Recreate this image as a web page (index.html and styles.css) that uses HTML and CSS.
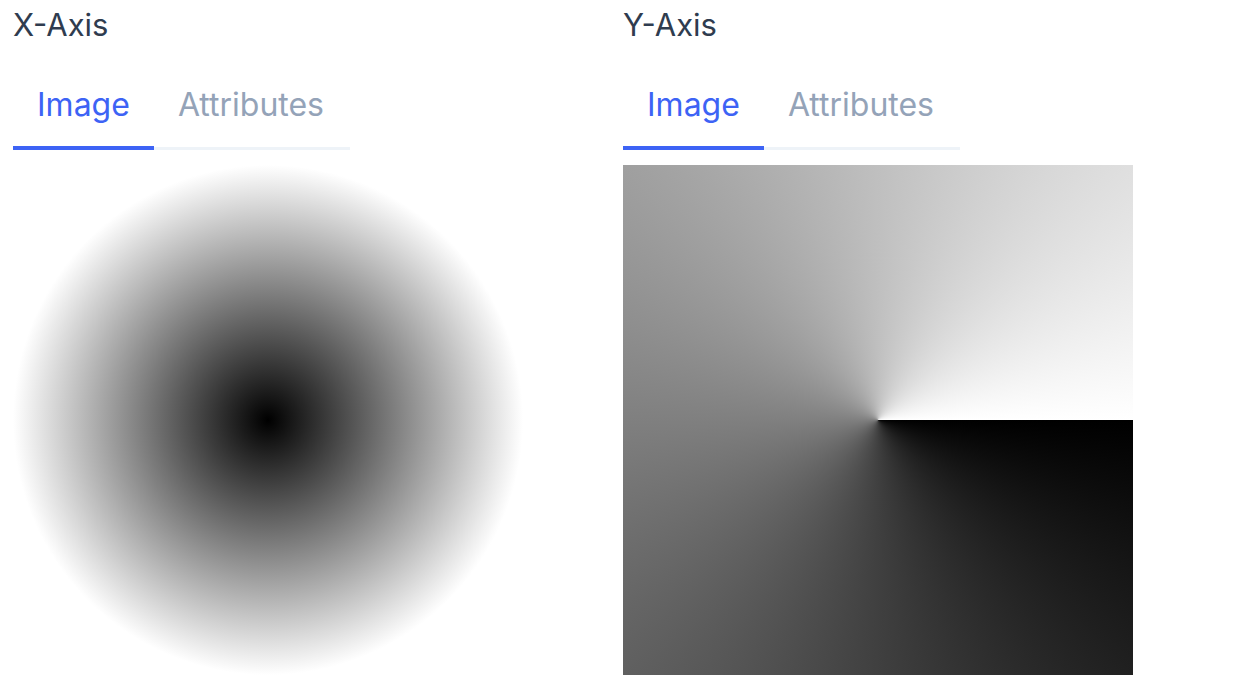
FILE: index.html
```html
<!DOCTYPE html>
<html lang="en">
<head>
<meta charset="utf-8">
<title>Axes</title>
<link rel="stylesheet" href="styles.css">
</head>
<body>
<main class="grid">
  <section class="panel">
    <h2 class="panel-title">X-Axis</h2>
    <div class="tabs">
      <button class="tab active">Image</button>
      <button class="tab">Attributes</button>
    </div>
    <div class="map radial"></div>
  </section>
  <section class="panel">
    <h2 class="panel-title">Y-Axis</h2>
    <div class="tabs">
      <button class="tab active">Image</button>
      <button class="tab">Attributes</button>
    </div>
    <div class="map conic"></div>
  </section>
</main>
</body>
</html>
```

FILE: styles.css
```css
* { box-sizing: border-box; }
html, body { margin: 0; padding: 0; background: #fff; }
body {
  font-family: Inter, "Noto Sans", sans-serif;
  color: #334155;
}
.grid {
  display: grid;
  grid-template-columns: 600px 600px;
  column-gap: 10px;
  padding: 0 13px;
}
.panel { display: flex; flex-direction: column; align-items: flex-start; }
.panel-title {
  margin: 7px 0 0;
  font-size: 31px;
  line-height: 36px;
  font-weight: 400;
  color: #2f3c4f;
}
.tabs {
  display: flex;
  align-items: flex-end;
  margin-top: 42px;
}
.tab {
  font-family: inherit;
  background: none;
  border: 0;
  margin: 0;
  font-size: 32px;
  line-height: 40px;
  padding: 0 24px 22px;
  color: #94a3b8;
  border-bottom: 3px solid #eef3f8;
  cursor: pointer;
}
.tab + .tab { padding-right: 26px; }
.tab.active {
  color: #3d63f5;
  padding-bottom: 21px;
  border-bottom: 4px solid #3d63f5;
}
.map {
  width: 510px;
  height: 510px;
  margin-top: 15px;
}
.radial {
  background: radial-gradient(circle closest-side at center, #000 0%, #fff 100%);
}
.conic {
  background: conic-gradient(from 90deg at 50% 50%, #000 0deg, #fff 360deg);
}
```
